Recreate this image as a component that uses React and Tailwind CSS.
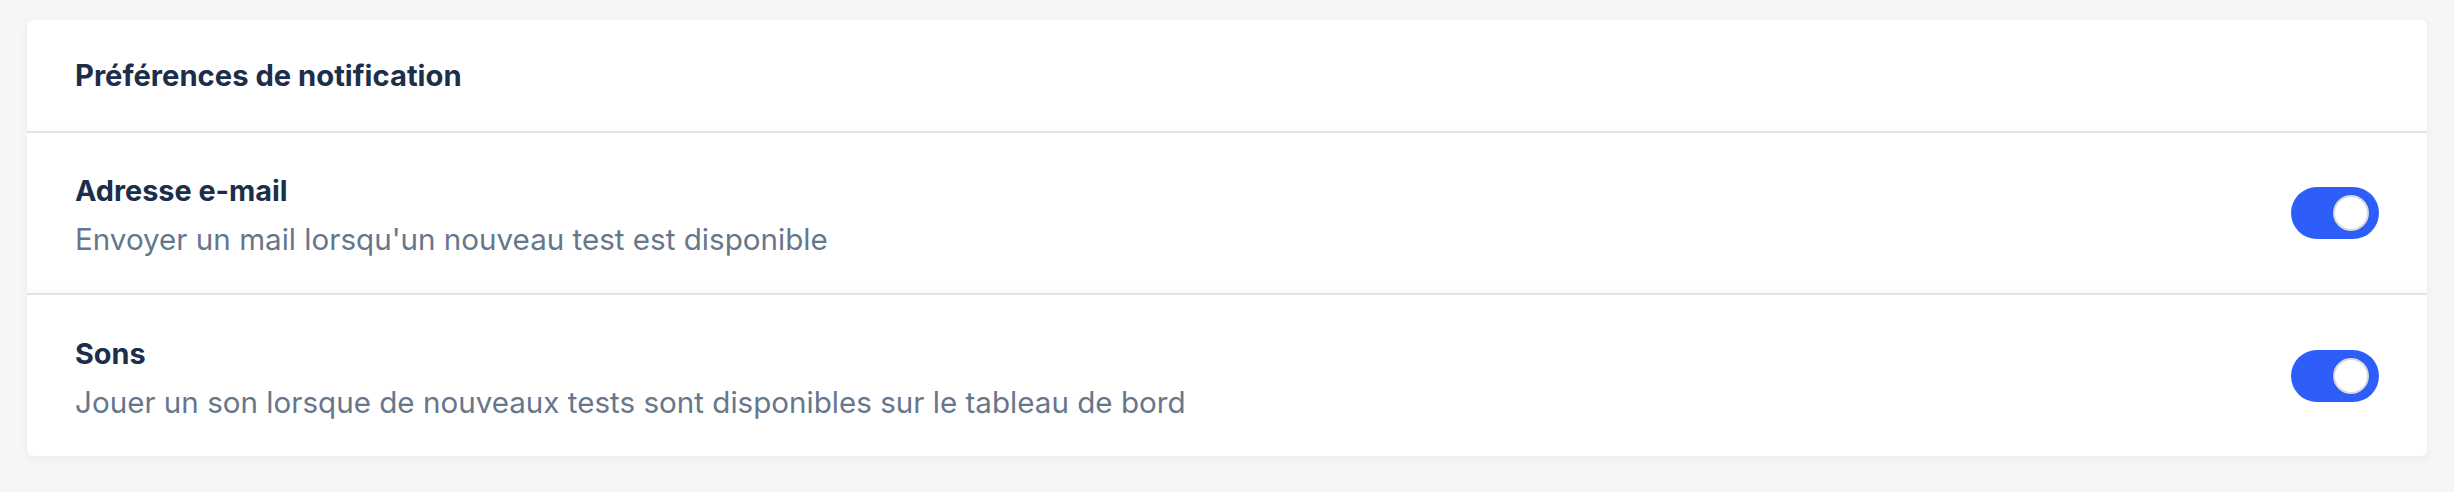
import React from "react";

function Toggle() {
  return (
    <div className="flex h-[52px] w-[88px] shrink-0 items-center justify-end rounded-full bg-[#2d5ef9] pr-[10px]">
      <div className="h-[36px] w-[36px] rounded-full border-2 border-[#d6d8de] bg-white shadow-[0_0_2px_rgba(0,0,0,0.15)]" />
    </div>
  );
}

function Row({ label, desc, last }) {
  return (
    <div
      className={
        last
          ? "flex h-[161px] items-center justify-between px-[48px]"
          : "flex h-[162px] items-center justify-between border-b-2 border-[#e1e5ea] px-[48px] shadow-[inset_0_-14px_14px_-14px_rgba(0,0,0,0.035)]"
      }
    >
      <div className="mt-[6px] flex flex-col gap-[10px]">
        <div className="text-[28.8px] font-bold leading-[36px] text-[#1b2e4a]">{label}</div>
        <div className="text-[29.6px] font-normal leading-[40px] text-[#66768b]">{desc}</div>
      </div>
      <Toggle />
    </div>
  );
}

export default function App() {
  return (
    <div className="min-h-[492px] bg-[#f5f6f8] px-[27px] pb-[36px] pt-[20px] font-['Inter',sans-serif]">
      <div className="overflow-hidden rounded-[6px] bg-white shadow-[0_2px_10px_rgba(30,40,60,0.05)]">
        <div className="flex h-[113px] items-center border-b-2 border-[#e1e5ea] px-[48px] shadow-[inset_0_-14px_14px_-14px_rgba(0,0,0,0.035)]">
          <h2 className="text-[29.2px] font-bold leading-[36px] text-[#1b2e4a]">
            Préférences de notification
          </h2>
        </div>
        <Row label="Adresse e-mail" desc="Envoyer un mail lorsqu'un nouveau test est disponible" />
        <Row
          label="Sons"
          desc="Jouer un son lorsque de nouveaux tests sont disponibles sur le tableau de bord"
          last
        />
      </div>
    </div>
  );
}
